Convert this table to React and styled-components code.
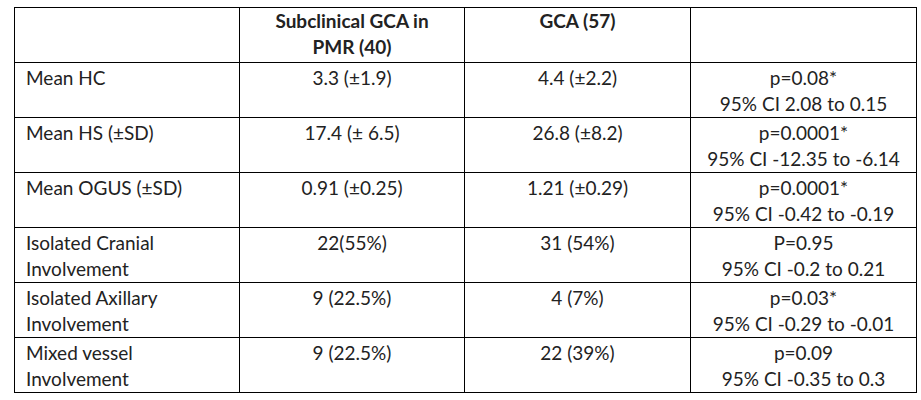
import React from "react";
import styled, { createGlobalStyle } from "styled-components";

const Global = createGlobalStyle`
  html, body { margin: 0; padding: 0; background: #fff; }
  body { font-family: Lato, "Liberation Sans", sans-serif; color: #222; }
`;

const Page = styled.div`
  padding: 7px 0 0 14px;
`;

const Table = styled.table`
  border-collapse: collapse;
  table-layout: fixed;
  width: 903px;
  font-size: 19px;
  line-height: 26px;
`;

const Row = styled.tr`
  height: ${(p) => p.$h}px;
`;

const Cell = styled.td`
  border: 1px solid #000;
  padding: ${(p) => (p.$head ? "0" : "2px")} 11px 0;
  vertical-align: top;
  text-align: ${(p) => (p.$left ? "left" : "center")};
  font-weight: ${(p) => (p.$head ? 700 : 400)};
`;

const Line = styled.div`
  white-space: nowrap;
`;

const rows = [
  ["Mean HC", "3.3 (\u00b11.9)", "4.4 (\u00b12.2)", ["p=0.08*", "95% CI 2.08 to 0.15"], 55],
  ["Mean HS (\u00b1SD)", "17.4 (\u00b1 6.5)", "26.8 (\u00b18.2)", ["p=0.0001*", "95% CI -12.35 to -6.14"], 55],
  ["Mean OGUS (\u00b1SD)", "0.91 (\u00b10.25)", "1.21 (\u00b10.29)", ["p=0.0001*", "95% CI -0.42 to -0.19"], 55],
  [["Isolated Cranial", "Involvement"], "22(55%)", "31 (54%)", ["P=0.95", "95% CI -0.2 to 0.21"], 55],
  [["Isolated Axillary", "Involvement"], "9 (22.5%)", "4 (7%)", ["p=0.03*", "95% CI -0.29 to -0.01"], 54],
  [["Mixed vessel", "Involvement"], "9 (22.5%)", "22 (39%)", ["p=0.09", "95% CI -0.35 to 0.3"], 54],
];

const Lines = ({ v }) =>
  Array.isArray(v) ? v.map((t, i) => <Line key={i}>{t}</Line>) : <Line>{v}</Line>;

export default function App() {
  return (
    <Page>
      <Global />
      <Table>
        <colgroup>
          <col style={{ width: 225 }} />
          <col style={{ width: 225 }} />
          <col style={{ width: 226 }} />
          <col style={{ width: 226 }} />
        </colgroup>
        <tbody>
          <Row $h={55}>
            <Cell $head />
            <Cell $head>
              <Lines v={["Subclinical GCA in", "PMR (40)"]} />
            </Cell>
            <Cell $head>
              <Lines v="GCA (57)" />
            </Cell>
            <Cell $head />
          </Row>
          {rows.map((r, i) => (
            <Row key={i} $h={r[4]}>
              <Cell $left>
                <Lines v={r[0]} />
              </Cell>
              <Cell>
                <Lines v={r[1]} />
              </Cell>
              <Cell>
                <Lines v={r[2]} />
              </Cell>
              <Cell>
                <Lines v={r[3]} />
              </Cell>
            </Row>
          ))}
        </tbody>
      </Table>
    </Page>
  );
}
